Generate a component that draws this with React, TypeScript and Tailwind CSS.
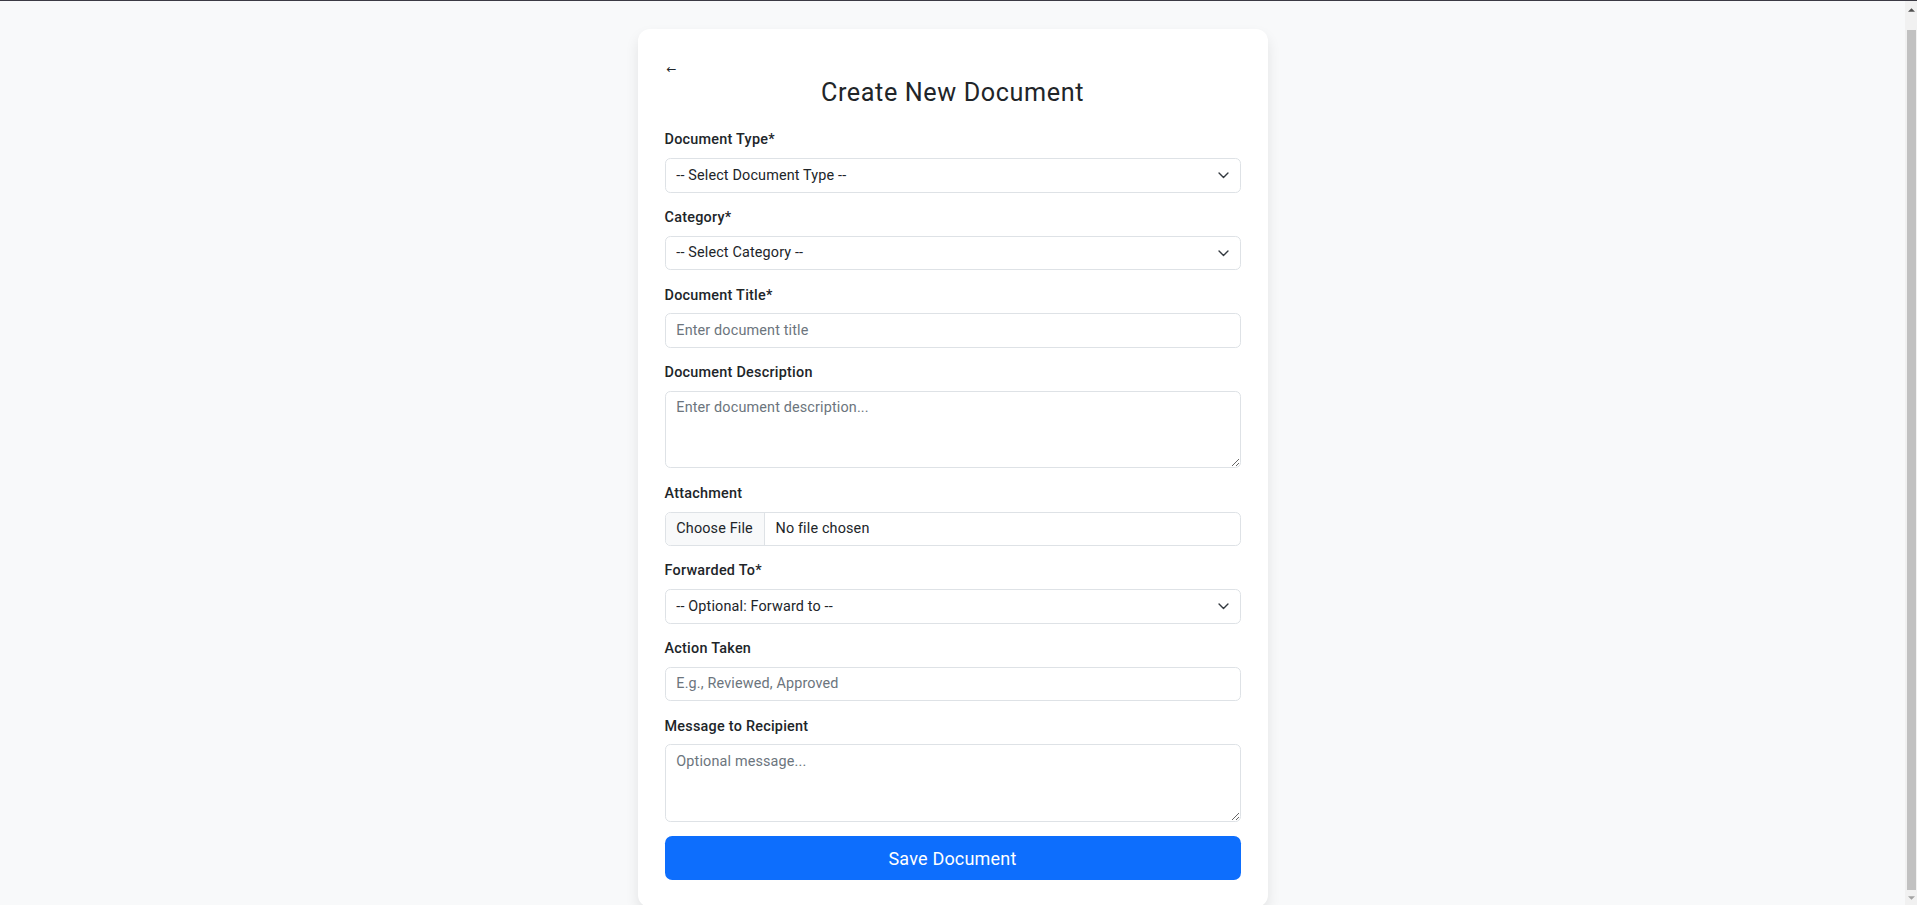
import React from 'react';

const labelCls = 'block text-[14.4px] leading-[21.6px] font-medium tracking-[0.25px] mb-[7.2px]';
const controlCls =
  'block w-full h-[34.4px] px-[10.8px] py-[5.4px] text-[14.4px] leading-[21.6px] tracking-[0.15px] text-[#212529] bg-white border border-[#dee2e6] rounded-[5.4px] outline-none placeholder:text-[#6c757d]';
const areaCls =
  'block w-full h-[77.6px] px-[10.8px] py-[5.4px] text-[14.4px] leading-[21.6px] tracking-[0.15px] text-[#212529] bg-white border border-[#dee2e6] rounded-[5.4px] outline-none placeholder:text-[#6c757d]';

const Chevron = () => (
  <svg
    viewBox="0 0 16 16"
    className="pointer-events-none absolute right-[11px] top-1/2 -translate-y-1/2 w-[13px] h-[13px]"
    fill="none"
    stroke="#343a40"
    strokeWidth="1.7"
    strokeLinecap="round"
    strokeLinejoin="round"
  >
    <path d="m2.5 5.5 5.5 5.5 5.5-5.5" />
  </svg>
);

const SelectField = ({ label, placeholder }: { label: string; placeholder: string }) => (
  <div className="mb-[14.4px]">
    <label className={labelCls}>{label}</label>
    <div className="relative">
      <select className={`${controlCls} appearance-none pr-[36px]`} defaultValue="">
        <option value="">{placeholder}</option>
      </select>
      <Chevron />
    </div>
  </div>
);

// the page overflows a little, so the window shows a classic scrollbar on the right
const ScrollBar = () => (
  <div className="w-[12px] shrink-0 bg-[#f1f1f1] flex flex-col">
    <div className="h-[17px] flex items-center justify-center">
      <svg viewBox="0 0 8 4" className="w-[7px] h-[4px]">
        <path d="M0 4 4 0 8 4Z" fill="#505050" />
      </svg>
    </div>
    <div className="flex-1 pt-[12px] pb-[0px] pl-[2px] pr-[1px]">
      <div className="h-full bg-[#c1c1c1]" />
    </div>
    <div className="h-[15px] flex items-center justify-center">
      <svg viewBox="0 0 8 4" className="w-[7px] h-[4px]">
        <path d="M0 0 4 4 8 0Z" fill="#a3a3a3" />
      </svg>
    </div>
  </div>
);

export default function App() {
  return (
    <div className="h-screen overflow-hidden border-t border-[#3b3a44] bg-[#f8f9fa] font-['Roboto',sans-serif] text-[#212529] flex">
      <div className="flex-1 min-w-0">
        <div className="flex justify-center pt-[28px] pb-[29px]">
          <div className="w-[630px] bg-white rounded-[12px] shadow-[0_7px_14px_rgba(0,0,0,0.09)] px-[27px] pt-[27px] pb-[27px]">
            <button className="block h-[21.6px] text-[12px] leading-[27px] text-[#212529] pl-[2px] font-['DejaVu_Sans',sans-serif]">
              ←
            </button>
            <h3 className="text-center text-[25.2px] leading-[30.24px] tracking-[0.6px] font-normal mb-[21.6px]">
              Create New Document
            </h3>

            <form onSubmit={(e) => e.preventDefault()}>
              <SelectField label="Document Type*" placeholder="-- Select Document Type --" />
              <SelectField label="Category*" placeholder="-- Select Category --" />

              <div className="mb-[14.4px]">
                <label className={labelCls}>Document Title*</label>
                <input type="text" className={controlCls} placeholder="Enter document title" />
              </div>

              <div className="mb-[14.4px]">
                <label className={labelCls}>Document Description</label>
                <textarea rows={3} className={areaCls} placeholder="Enter document description..." />
              </div>

              <div className="mb-[14.4px]">
                <label className={labelCls}>Attachment</label>
                <div className="flex h-[34.4px] text-[14.4px] leading-[21.6px] tracking-[0.15px] border border-[#dee2e6] rounded-[5.4px] overflow-hidden">
                  <span className="bg-[#f8f9fa] border-r border-[#dee2e6] px-[10.8px] py-[5.4px]">Choose File</span>
                  <span className="px-[10.8px] py-[5.4px]">No file chosen</span>
                </div>
              </div>

              <SelectField label="Forwarded To*" placeholder="-- Optional: Forward to --" />

              <div className="mb-[14.4px]">
                <label className={labelCls}>Action Taken</label>
                <input type="text" className={controlCls} placeholder="E.g., Reviewed, Approved" />
              </div>

              <div className="mb-[14.4px]">
                <label className={labelCls}>Message to Recipient</label>
                <textarea rows={3} className={areaCls} placeholder="Optional message..." />
              </div>

              <button
                type="submit"
                className="block w-full h-[43.4px] bg-[#0d6efd] text-white text-[18px] leading-[27px] tracking-[0.2px] rounded-[7.2px]"
              >
                Save Document
              </button>
            </form>
          </div>
        </div>
      </div>
      <ScrollBar />
    </div>
  );
}
